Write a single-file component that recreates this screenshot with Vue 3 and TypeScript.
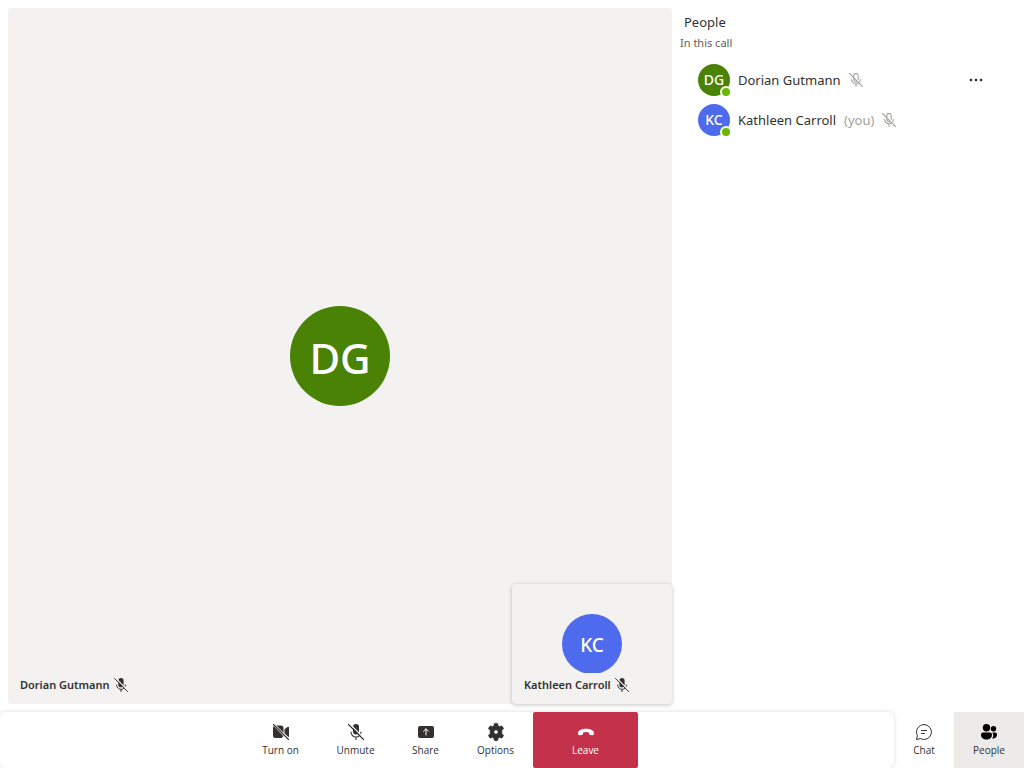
<script setup lang="ts">
import { ref } from 'vue'

interface Participant {
  name: string
  initials: string
  tone: 'green' | 'blue'
  self: boolean
}

const participants: Participant[] = [
  { name: 'Dorian Gutmann', initials: 'DG', tone: 'green', self: false },
  { name: 'Kathleen Carroll', initials: 'KC', tone: 'blue', self: true },
]
const [remote, local] = participants
const panel = ref<'chat' | 'people'>('people')
</script>

<template>
  <svg class="sprite" aria-hidden="true">
    <symbol id="mic-off" viewBox="0 0 16 16">
      <mask id="mic-cut">
        <rect width="16" height="16" fill="#fff" />
        <path d="M1.4 -.4 17 15.2" stroke="#000" stroke-width="1.2" />
      </mask>
      <g mask="url(#mic-cut)">
        <rect x="5" y="0" width="6" height="10.6" rx="3" fill="currentColor" />
        <path d="M3 8a5 5 0 0 0 10 0M8 13v3" fill="none" stroke="currentColor" stroke-width="1.1" stroke-linecap="round" />
      </g>
      <path d="M.5 .5 15.5 15.5" stroke="currentColor" stroke-width="1.1" stroke-linecap="round" />
    </symbol>
    <symbol id="mic-off-line" viewBox="0 0 16 16">
      <path d="M5.5 5.5V3a2.5 2.5 0 0 1 5 0v4.5M5.5 5.5v2a2.5 2.5 0 0 0 4 2M3 7.5a5 5 0 0 0 8.5 3.5M13 7.5a5 5 0 0 1-.6 2.2M8 12.7v2.8M.5 .5l15 15" fill="none" stroke="currentColor" stroke-width="1.2" stroke-linecap="round" />
    </symbol>
  </svg>
  <div class="app">
    <div class="workspace">
      <main class="stage">
        <div class="avatar large green">{{ remote.initials }}</div>
        <div class="caption">
          <span>{{ remote.name }}</span>
          <svg class="mic"><use href="#mic-off" /></svg>
        </div>
        <section class="preview">
          <div class="clip"><div class="avatar medium blue">{{ local.initials }}</div></div>
          <div class="caption">
            <span>{{ local.name }}</span>
            <svg class="mic"><use href="#mic-off" /></svg>
          </div>
        </section>
      </main>
      <aside class="people">
        <h1>People</h1>
        <h2>In this call</h2>
        <ul>
          <li v-for="p in participants" :key="p.name">
            <div class="avatar small" :class="p.tone">{{ p.initials }}<i class="presence"></i></div>
            <span class="name">{{ p.name }}</span>
            <span v-if="p.self" class="you">(you)</span>
            <svg class="mic muted"><use href="#mic-off-line" /></svg>
            <button v-if="!p.self" class="more" type="button" aria-label="More options">
              <svg viewBox="0 0 14 4" width="14" height="4"><path d="M1 1h2v2H1zM6 1h2v2H6zM11 1h2v2h-2z" fill="currentColor" stroke="currentColor" stroke-width=".4" stroke-linejoin="round" /></svg>
            </button>
          </li>
        </ul>
      </aside>
    </div>
    <footer class="bottom">
      <div class="controls">
        <button type="button" class="control">
          <svg viewBox="0 0 20 20">
            <path d="M4.8 3.600H10A2.500 2.500 0 0 1 12.500 6.100v5.200zM2.700 3.900l9.600 10.100A2.500 2.500 0 0 1 10 16H4.500A2.500 2.500 0 0 1 2 13.500v-7q0-1.400.7-2.600zM13.500 7.300 16.500 5q1.500-.9 1.500.8v8.400q0 .8-.6.8l-3.900-3.600z" fill="currentColor" />
            <path d="M3.700 2.300l14.500 14.500" stroke="#fff" stroke-width="1" />
            <path d="M2.500 2.500l15 15" stroke="currentColor" stroke-width="1.100" stroke-linecap="round" />
          </svg>
          <span>Turn on</span>
        </button>
        <button type="button" class="control">
          <svg viewBox="-2 -2 20 20"><use href="#mic-off" width="16" height="16" /></svg>
          <span>Unmute</span>
        </button>
        <button type="button" class="control narrow">
          <svg viewBox="0 0 20 20">
            <rect x="2" y="4" width="16" height="12" rx="2" fill="currentColor" />
            <path d="M10 13V7M7.500 9.300 10 6.800l2.500 2.500" fill="none" stroke="#fff" stroke-linecap="round" stroke-linejoin="round" />
          </svg>
          <span>Share</span>
        </button>
        <button type="button" class="control">
          <svg viewBox="0 0 20 20">
            <path fill-rule="evenodd" d="M8.200 1.400q1.800-.4 3.600 0l.4 2.300q.8.300 1.400.8l2.200-.8q1.300 1.300 1.900 3.100l-1.800 1.500q.2.900 0 1.700v1.700l1.800 1.500q-.6 1.800-1.900 3.100l-2.200-.8q-.6.500-1.400.8l-.4 2.300q-1.800.4-3.600 0l-.4-2.300q-.8-.3-1.400-.8l-2.200.8q-1.300-1.300-1.900-3.100l1.800-1.500V8.300L2.300 6.800q.6-1.800 1.900-3.100l2.200.8q.6-.5 1.400-.8zM10 8a2 2 0 1 0 0 4 2 2 0 0 0 0-4z" fill="currentColor" stroke="currentColor" stroke-width=".4" stroke-linejoin="round" />
          </svg>
          <span>Options</span>
        </button>
        <button type="button" class="control leave">
          <svg viewBox="0 0 20 20"><path d="M2 11.200C2 8.400 5.500 6.800 10 6.800s8 1.600 8 4.400q0 2.400-1.800 2.100l-2.100-.4q-1-.2-1.100-1.300l-.1-1.200q-2.900-.8-5.800 0L7 11.600q-.1 1.100-1.100 1.300l-2.100.4Q2 13.600 2 11.200z" fill="currentColor" /></svg>
          <span>Leave</span>
        </button>
      </div>
      <nav class="tabs">
        <button type="button" class="control chat" :class="{ active: panel === 'chat' }" @click="panel = 'chat'">
          <svg viewBox="0 0 20 20" fill="none" stroke="currentColor" stroke-linecap="round" stroke-linejoin="round">
            <path d="M10 2.500a7.500 7.500 0 1 1-3.600 14.100L2.500 17.500l.9-3.900A7.500 7.500 0 0 1 10 2.500zM7.500 8.500h5M7.500 11.500h3" />
          </svg>
          <span>Chat</span>
        </button>
        <button type="button" class="control" :class="{ active: panel === 'people' }" @click="panel = 'people'">
          <svg viewBox="0 0 20 20" fill="currentColor">
            <circle cx="7.500" cy="5.700" r="3.700" /><circle cx="14.500" cy="6.700" r="2.700" />
            <path d="M4 10.500h7a2 2 0 0 1 2 2c0 3.500-2.200 5-5.500 5s-5.500-1.500-5.500-5a2 2 0 0 1 2-2zM13.200 10.500H16a2 2 0 0 1 2 2c0 2.800-1.600 4-4 4l-.8-.1q1.800-3 .6-5.200z" />
          </svg>
          <span>People</span>
        </button>
      </nav>
    </footer>
  </div>
</template>

<style>
body {
  margin: 0;
  background: #fff;
}
</style>

<style scoped>
* {
  box-sizing: border-box;
}
.sprite {
  position: absolute;
  width: 0;
  height: 0;
}
.app {
  display: flex;
  flex-direction: column;
  height: 100vh;
  overflow: hidden;
  color: #323130;
  font: 13px/20px "Noto Sans", sans-serif;
}
button {
  padding: 0;
  border: 0;
  background: none;
  color: inherit;
  font: inherit;
}
.workspace {
  flex: 1;
  display: flex;
  min-height: 0;
}
.stage {
  position: relative;
  flex: 1;
  display: flex;
  align-items: center;
  justify-content: center;
  margin: 8px 0 8px 8px;
  border-radius: 4px;
  background: #f3f2f1;
}
.avatar {
  display: flex;
  align-items: center;
  justify-content: center;
  flex: none;
  border-radius: 50%;
  color: #fff;
  font-weight: 500;
}
.green {
  background: #498205;
}
.blue {
  background: #4f6bed;
}
.large {
  width: 100px;
  height: 100px;
  padding-top: 4px;
  font-size: 42px;
}
.medium {
  width: 60px;
  height: 60px;
  padding-top: 2px;
  font-size: 19px;
}
.small {
  position: relative;
  width: 32px;
  height: 32px;
  font-size: 14px;
}
.presence {
  position: absolute;
  right: -2px;
  bottom: -2px;
  width: 12px;
  height: 12px;
  border: 2px solid #fff;
  border-radius: 50%;
  background: #6bb700;
}
.caption {
  position: absolute;
  left: 12px;
  bottom: 8px;
  display: flex;
  align-items: center;
  gap: 4px;
  height: 22px;
  font-size: 11px;
  font-weight: 600;
  white-space: nowrap;
}
.mic {
  flex: none;
  width: 14px;
  height: 14px;
}
.preview {
  position: absolute;
  right: 0;
  bottom: 0;
  display: flex;
  justify-content: center;
  width: 160px;
  height: 120px;
  padding-top: 30px;
  border-radius: 4px;
  background: #f3f2f1;
  box-shadow: 0 1px 4px rgba(0, 0, 0, 0.24);
}
.clip {
  height: 59px;
  overflow: hidden;
}
.people {
  width: 352px;
  padding: 12px 8px;
}
h1,
h2 {
  margin: 0;
  font-weight: 400;
}
h1 {
  padding-left: 4px;
  font-size: 13px;
  line-height: 20px;
}
h2 {
  color: #605e5c;
  font-size: 11px;
  line-height: 22px;
}
ul {
  margin: 6px 0 0;
  padding: 0 30px 0 18px;
  list-style: none;
}
li {
  display: flex;
  align-items: center;
  gap: 8px;
  height: 40px;
}
.you,
.muted {
  color: #a19f9d;
}
.more {
  width: 20px;
  height: 24px;
  margin-left: auto;
}
.more svg {
  display: block;
  margin: auto;
}
.bottom {
  display: flex;
  height: 56px;
}
.controls {
  flex: 1;
  display: flex;
  justify-content: center;
  padding-right: 13px;
  border-radius: 6px;
  box-shadow: 0 0 4px rgba(0, 0, 0, 0.16);
}
.control {
  display: flex;
  flex-direction: column;
  align-items: center;
  justify-content: center;
  width: 75px;
  font-family: "Open Sans", "Noto Sans", sans-serif;
  font-size: 10px;
  line-height: 16px;
}
.control svg {
  width: 20px;
  height: 20px;
}
.narrow {
  width: 65px;
}
.leave {
  width: 105px;
  border-radius: 2px;
  background: #c4314b;
  color: #fff;
}
.tabs {
  display: flex;
}
.tabs .control {
  width: 70px;
}
.tabs .chat {
  width: 60px;
}
.active {
  background: #edebe9;
}
.active svg {
  color: #000;
}
</style>
